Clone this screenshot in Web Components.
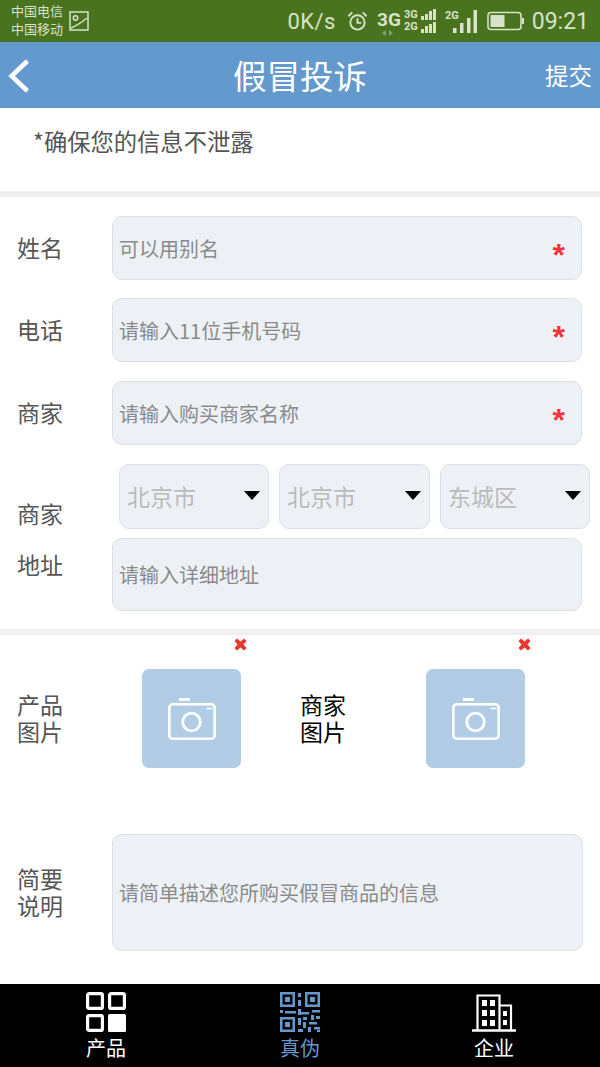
<!DOCTYPE html>
<html lang="zh">
<head>
<meta charset="utf-8">
<title>假冒投诉</title>
<style>
  html, body { margin: 0; padding: 0; background: #fff; }
  body {
    width: 600px;
    height: 1067px;
    overflow: hidden;
    display: flex;
    flex-direction: column;
    font-family: "Noto Sans CJK SC", "Noto Sans", sans-serif;
  }
  main { flex: 1; min-height: 0; }
</style>
</head>
<body>
<status-bar></status-bar>
<app-header title="假冒投诉" action="提交"></app-header>
<main>
  <notice-box>*确保您的信息不泄露</notice-box>
  <form-section pad="19px 0 18px">
    <form-row label="姓名" placeholder="可以用别名" required style="margin-bottom:18px"></form-row>
    <form-row label="电话" placeholder="请输入11位手机号码" required></form-row>
    <form-row label="商家" placeholder="请输入购买商家名称" required></form-row>
    <address-row></address-row>
  </form-section>
  <form-section pad="0">
    <photo-row></photo-row>
    <desc-row></desc-row>
  </form-section>
</main>
<tab-bar></tab-bar>

<script>
const icons = {
  camera: `<svg width="48" height="42" viewBox="0 0 48 42" fill="none" stroke="#fff" stroke-width="2.600">
    <rect x="1.300" y="6.300" width="45.400" height="34.400" rx="3.500"/>
    <rect x="11" y="0" width="11" height="3" fill="#fff" stroke="none"/>
    <circle cx="23.500" cy="24" r="8.800" stroke-width="2.800"/>
    <path d="M38.500 10.500h6" stroke-width="1.600"/>
  </svg>`,
  cross: `<svg width="13" height="13" viewBox="0 0 13 13"><path d="M3 .5l3.500 3L10 .5 12.500 3 9.500 6.500l3 3.500L10 12.500 6.500 9.500 3 12.500.5 10l3-3.500L.5 3z" fill="#e5392f"/></svg>`,
  grid: `<svg width="40" height="40" viewBox="0 0 40 40" fill="none" stroke="#fff" stroke-width="3.200">
    <rect x="1.600" y="1.600" width="14.800" height="14.800" rx="1.500"/>
    <rect x="23.600" y="1.600" width="14.800" height="14.800" rx="1.500"/>
    <rect x="1.600" y="23.600" width="14.800" height="14.800" rx="1.500"/>
    <rect x="22" y="22" width="18" height="18" rx="1.500" fill="#fff" stroke="none"/>
  </svg>`,
  qr: `<svg width="40" height="40" viewBox="0 0 40 40" fill="#6499cd">
    <path fill-rule="evenodd" d="M0 0h15v15H0zM2.500 2.500v10h10v-10z"/><rect x="5" y="5" width="5" height="5"/>
    <path fill-rule="evenodd" d="M25 0h15v15H25zM27.500 2.500v10h10v-10z"/><rect x="30" y="5" width="5" height="5"/>
    <path fill-rule="evenodd" d="M0 25h15v15H0zM2.500 27.500v10h10v-10z"/><rect x="5" y="30" width="5" height="5"/>
    <rect x="18" y="1" width="3" height="4"/><rect x="18" y="8" width="3" height="6"/>
    <rect x="0" y="18" width="3" height="3"/><rect x="5" y="19" width="11" height="2.500"/>
    <rect x="18" y="17" width="3" height="6"/><rect x="21" y="20" width="8" height="2.500"/>
    <rect x="32" y="18" width="8" height="2.500"/><rect x="18" y="26" width="3" height="7"/>
    <rect x="23" y="25" width="4" height="3"/><rect x="31" y="23" width="3" height="5"/>
    <rect x="36" y="24" width="4" height="3"/><rect x="23" y="30" width="3" height="6"/>
    <rect x="29" y="30" width="8" height="2.500"/><rect x="28" y="35" width="3" height="5"/>
    <rect x="34" y="35" width="6" height="2.500"/><rect x="37" y="38" width="3" height="2"/>
    <rect x="18" y="37" width="5" height="3"/>
  </svg>`,
  building: `<svg width="44" height="38" viewBox="0 0 44 38" fill="none" stroke="#fff" stroke-width="2.200">
    <path d="M0 36.500h44" stroke-width="2.600"/>
    <path d="M5.500 36V1.500h22V36M27.500 11.500h11.500V36"/>
    <g fill="#fff" stroke="none">
      <rect x="10" y="6" width="5" height="6"/><rect x="18" y="6" width="5" height="6"/>
      <rect x="10" y="16" width="5" height="6"/><rect x="18" y="16" width="5" height="6"/>
      <rect x="10" y="26" width="5" height="6"/><rect x="18" y="26" width="5" height="6"/>
      <rect x="31" y="17" width="4" height="5"/><rect x="31" y="26" width="4" height="5"/>
    </g>
  </svg>`
};

function define(name, css, html, setup) {
  customElements.define(name, class extends HTMLElement {
    connectedCallback() {
      if (this.shadowRoot) return;
      this.attachShadow({ mode: "open" });
      this.shadowRoot.innerHTML = `<style>${css}</style>` + html(this);
      if (setup) setup(this);
    }
  });
}

define("status-bar", `
  :host { display: flex; align-items: center; height: 42px; flex: none; box-sizing: border-box; padding: 0 11px; background: #4a731f; color: #d8e2c8; font-family: "Roboto", "Noto Sans CJK SC", sans-serif; }
  .carriers { font: 13px/18px "Liberation Sans", "Noto Sans CJK SC", sans-serif; width: 58px; }
  .carriers div { white-space: nowrap; }
  .right { margin-left: auto; display: flex; align-items: center; }
  .speed { font-size: 22px; margin-right: 11px; letter-spacing: .4px; }
  .clock { font-size: 23px; margin-left: 8px; }
  svg { display: block; }
`, () => `
  <div class="carriers"><div>中国电信</div><div>中国移动</div></div>
  <svg width="20" height="20" viewBox="0 0 20 20" fill="none" stroke="#d8e2c8" stroke-width="1.500"><rect x="1" y="1" width="18" height="18"/><circle cx="6.500" cy="7" r="2.200"/><path d="M2 17C7 15 13 11 18 7"/></svg>
  <div class="right">
    <span class="speed">0K/s</span>
    <svg width="21" height="22" viewBox="0 0 22 22" fill="none" stroke="#d8e2c8" stroke-width="2" style="margin-right:9px"><circle cx="11" cy="12.500" r="7.500"/><path d="M11 8v5h4M1.500 6L5.500 2M20.500 6L16.500 2"/></svg>
    <svg width="24" height="28" viewBox="0 0 24 28" style="margin-right:3px;margin-top:2px"><text x="0" y="18" font-family="Roboto" font-weight="700" font-size="19" fill="#d8e2c8">3G</text><path d="M9 22v6l-4-3zM12 22v6l4-3z" fill="#8aa171"/></svg>
    <svg width="32" height="26" viewBox="0 0 32 26" fill="#d8e2c8" style="margin-right:9px"><text x="0" y="10" font-family="Roboto" font-weight="700" font-size="11">3G</text><text x="0" y="22" font-family="Roboto" font-weight="700" font-size="11">2G</text>
      <rect x="17" y="8" width="3" height="4"/><rect x="21" y="6" width="3" height="6"/><rect x="25" y="3" width="3" height="9"/><rect x="29" y="1" width="3" height="11"/>
      <rect x="17" y="21" width="3" height="4"/><rect x="21" y="18" width="3" height="7"/><rect x="25" y="16" width="3" height="9"/><rect x="29" y="14" width="3" height="11"/></svg>
    <svg width="32" height="26" viewBox="0 0 32 26" fill="#d8e2c8" style="margin-right:10px"><text x="0" y="11" font-family="Roboto" font-weight="700" font-size="11">2G</text>
      <rect x="8" y="20" width="3.500" height="5"/><rect x="15" y="15" width="3.500" height="10"/><rect x="22" y="10" width="3.500" height="15"/><rect x="28.500" y="2" width="3.500" height="23"/></svg>
    <svg width="37" height="20" viewBox="0 0 37 20" fill="none"><rect x="1" y="1.500" width="33" height="17" rx="3" stroke="#d8e2c8" stroke-width="1.600"/><rect x="3.500" y="4" width="14" height="12" fill="#d8e2c8"/><rect x="35" y="7" width="2" height="6" fill="#d8e2c8"/></svg>
    <span class="clock">09:21</span>
  </div>
`);

define("app-header", `
  :host { display: flex; align-items: center; justify-content: center; position: relative; height: 66px; flex: none; background: #6499cd; color: #fff; }
  h1 { margin: 0; font-size: 33.500px; font-weight: 400; line-height: 1; }
  .back { position: absolute; left: 8px; top: 17px; }
  .action { position: absolute; right: 8px; top: 19px; font-size: 23.500px; line-height: 28px; }
`, el => `
  <svg class="back" width="22" height="34" viewBox="0 0 22 34" fill="none" stroke="#fff" stroke-width="4.500"><path d="M19.500 2L3.500 17l16 15"/></svg>
  <h1>${el.getAttribute("title")}</h1>
  <span class="action">${el.getAttribute("action")}</span>
`);

define("notice-box", `
  :host { display: block; height: 83px; box-sizing: border-box; padding: 19px 0 0 33px; color: #555; font-size: 23.300px; line-height: 32px; }
  div { margin-top: -2px; }
`, () => `<div><slot></slot></div>`);

define("form-section", `
  :host { display: block; border-top: 6px solid #f0f0f0; }
  .wrap { display: flex; flex-direction: column; }
`, el => `<div class="wrap" style="padding:${el.getAttribute("pad")}"><slot></slot></div>`);

const fieldCss = `
  .field { box-sizing: border-box; display: flex; align-items: center; background: #edf1f6; border: 1px solid #dcdfe3; border-radius: 10px; padding: 0 6px; color: #8a8a8a; font-size: 20px; }
  .lab { color: #555; font-size: 23px; line-height: 27px; font-family: "Liberation Sans", "Noto Sans CJK SC", sans-serif; }
`;

define("form-row", fieldCss + `
  :host { display: grid; grid-template-columns: 95px 470px; align-items: center; padding-left: 17px; margin-bottom: 19px; height: 64px; }
  .lab { margin-top: 3px; }
  .field { height: 64px; justify-content: space-between; }
  i { font: 700 32px/1 "Liberation Sans", sans-serif; font-style: normal; color: #f5333f; margin: 3px 10px 0 0; height: 22px; }
`, el => `
  <span class="lab">${el.getAttribute("label")}</span>
  <div class="field"><span>${el.getAttribute("placeholder")}</span><i>*</i></div>
`);

define("select-box", `
  :host { flex: none; box-sizing: border-box; height: 65px; display: flex; align-items: center; justify-content: space-between; background: #edf1f6; border: 1px solid #dcdfe3; border-radius: 10px; padding: 0 8px 0 7px; color: #bbb; font-size: 23px; line-height: 30px; }
  span { margin-top: -2px; }
  b { width: 0; height: 0; border: 8px solid transparent; border-top: 9px solid #000; border-bottom: 0; margin-top: -2px; }
`, () => `<span><slot></slot></span><b></b>`);

define("address-row", fieldCss + `
  :host { display: grid; grid-template-columns: 95px 478px; align-items: center; padding-left: 17px; }
  .lab { line-height: 51px; margin-top: 7px; }
  .stack { display: flex; flex-direction: column; gap: 9px; }
  .selects { display: flex; gap: 10px; margin-left: 7px; }
  .field { height: 73px; width: 470px; }
`, () => `
  <div class="lab">商家<br>地址</div>
  <div class="stack">
    <div class="selects">
      <select-box style="width:150px">北京市</select-box>
      <select-box style="width:151px">北京市</select-box>
      <select-box style="width:150px">东城区</select-box>
    </div>
    <div class="field">请输入详细地址</div>
  </div>
`);

define("photo-slot", `
  :host { position: relative; display: block; width: 99px; height: 99px; background: #b2cce6; border-radius: 7px; }
  .icon { display: flex; align-items: center; justify-content: center; height: 100%; }
  .x { position: absolute; right: -6px; top: -32px; display: block; }
`, () => `<div class="icon">${icons.camera}</div><span class="x">${icons.cross}</span>`);

define("photo-row", `
  :host { display: flex; align-items: center; padding: 34px 0 0 17px; height: 99px; font-family: "Liberation Sans", "Noto Sans CJK SC", sans-serif; }
  .lab { font-size: 23px; line-height: 27px; color: #555; width: 125px; margin-top: 2px; }
  .lab2 { font-size: 23px; line-height: 27px; color: #000; width: 126px; margin-left: 59px; margin-top: 2px; }
`, () => `
  <div class="lab">产品<br>图片</div>
  <photo-slot></photo-slot>
  <div class="lab2">商家<br>图片</div>
  <photo-slot></photo-slot>
`);

define("desc-row", fieldCss + `
  :host { display: grid; grid-template-columns: 95px 471px; align-items: center; padding: 66px 0 0 17px; }
  .lab { margin-top: 2px; }
  .field { height: 117px; }
`, () => `
  <div class="lab">简要<br>说明</div>
  <div class="field">请简单描述您所购买假冒商品的信息</div>
`);

define("tab-item", `
  :host { flex: none; display: flex; flex-direction: column; align-items: center; width: 120px; color: #fff; font-size: 20px; line-height: 26px; }
  :host([active]) { color: #6499cd; }
  .ic { height: 40px; display: flex; align-items: flex-end; margin-bottom: 3px; }
`, el => `<div class="ic">${icons[el.getAttribute("icon")]}</div><slot></slot>`);

define("tab-bar", `
  :host { display: flex; justify-content: space-between; flex: none; height: 83px; box-sizing: border-box; padding: 8px 46px 0; background: #000; }
`, () => `
  <tab-item icon="grid">产品</tab-item>
  <tab-item icon="qr" active>真伪</tab-item>
  <tab-item icon="building">企业</tab-item>
`);
</script>
</body>
</html>
